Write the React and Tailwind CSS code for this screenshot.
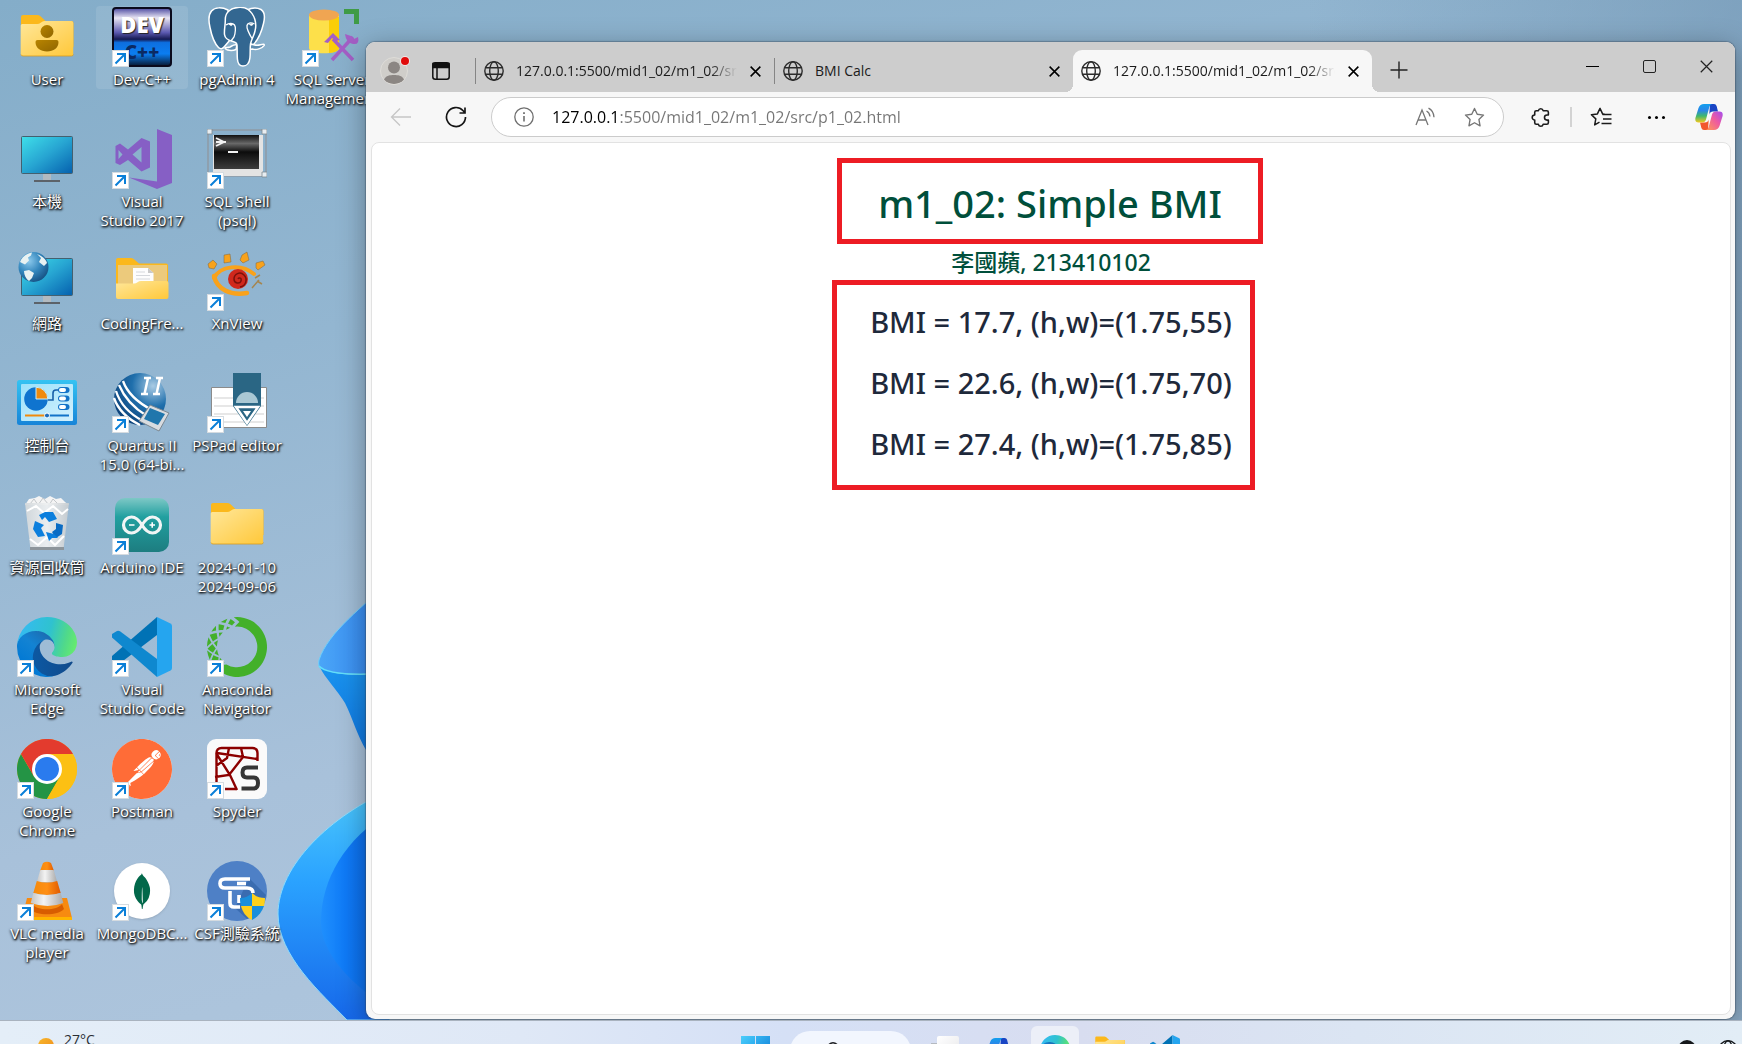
import React from "react";
import { SiPostman, SiMongodb, SiAnaconda } from "react-icons/si";

/* ---------- Desktop icons ---------- */

function Svg({ children, box = "0 0 60 60", className = "size-full" }) {
  return (
    <svg viewBox={box} className={className} aria-hidden="true">
      {children}
    </svg>
  );
}

function FolderDefs() {
  return (
    <defs>
      <linearGradient id="folderFront" x1="0" y1="0" x2="1" y2="1">
        <stop offset="0" stopColor="#ffe79a" />
        <stop offset="1" stopColor="#ffc83a" />
      </linearGradient>
      <linearGradient id="userGold" x1="0" y1="0" x2="1" y2="1">
        <stop offset="0" stopColor="#b88400" />
        <stop offset="1" stopColor="#8f6500" />
      </linearGradient>
    </defs>
  );
}

function FolderIcon({ user }) {
  return (
    <Svg>
      <FolderDefs />
      <path d="M4 10q0-2 2-2h14q2 0 3.500 1.300l5 4.700h26q2 0 2 2v24H4Z" fill="#fbb81c" />
      <path d="M3.700 18.500q0-1.500 1.500-1.500h15q2 0 3.500-1.200l1.500-1.100q1-.7 2.500-.7h26.500q2 0 2 2v31q0 2-2 2H5.700q-2 0-2-2Z" fill="url(#folderFront)" />
      <path d="M4 47.500q.5 1.500 2 1.500h48.500q1.500 0 2-1.500" fill="none" stroke="#d99c1c" strokeWidth=".8" />
      {user && (
        <g fill="url(#userGold)">
          <circle cx="30" cy="24.500" r="6.500" />
          <path d="M20.500 33h19q2 0 2 2c0 6-5 9.500-11.500 9.500S18.500 41 18.500 35q0-2 2-2Z" />
        </g>
      )}
    </Svg>
  );
}

function OpenFolderIcon() {
  return (
    <Svg>
      <FolderDefs />
      <path d="M4 9q0-2 2-2h12.500q2 0 3.500 1.300l5 4.200h27q2 0 2 2V44H4Z" fill="#fbb81c" />
      <path d="M6 14h49v26H6Z" fill="#ecca7c" />
      <path d="M21 17h15l5.500 5V38H21Z" fill="#fdfdfd" />
      <path d="M36 17l5.500 5H36Z" fill="#c9c9c9" />
      <path d="M24 21h9M24 24.500h14M24 28h14" stroke="#d5d8dc" strokeWidth="1" />
      <path d="M4 32.500h18q2 0 3.500-1.200t3.500-1.300h25.500q2 0 2 2V46q0 2-2 2H6q-2 0-2-2Z" fill="url(#folderFront)" />
    </Svg>
  );
}

function Monitor() {
  return (
    <>
      <defs>
        <linearGradient id="screen" x1="0" y1="0" x2="1" y2="1">
          <stop offset="0" stopColor="#3fe0ea" />
          <stop offset=".5" stopColor="#27a5d2" />
          <stop offset="1" stopColor="#0560ae" />
        </linearGradient>
      </defs>
      <path d="M26 45h8v7h-8Z" fill="#b3bac0" />
      <path d="M17 51h26v2H17Z" fill="#5c6269" />
      <rect x="4.500" y="7.500" width="51" height="37" rx="1" fill="url(#screen)" stroke="#44606f" />
    </>
  );
}

function PcIcon() {
  return (
    <Svg>
      <Monitor />
    </Svg>
  );
}

function NetworkIcon() {
  return (
    <Svg>
      <defs>
        <radialGradient id="earth" cx=".35" cy=".3" r=".8">
          <stop offset="0" stopColor="#8cc9ec" />
          <stop offset=".5" stopColor="#3487bd" />
          <stop offset="1" stopColor="#124a7c" />
        </radialGradient>
      </defs>
      <Monitor />
      <circle cx="16.500" cy="16" r="15" fill="url(#earth)" />
      <path d="M3 11c2-5 7-9 12-9.500l-1 3-3 2 1 3-4 4-2-1Zm4 9 5-1 5 3-2 5-3 3c-3-2-5-6-5-10Zm13-17c5 2 9 5 10 9l-3 3-5-4 2-4Z" fill="#e9f2f2" />
    </Svg>
  );
}

function ControlPanelIcon() {
  return (
    <Svg>
      <defs>
        <linearGradient id="cpFrame" x1="0" y1="0" x2="0" y2="1">
          <stop offset="0" stopColor="#35c3f2" />
          <stop offset="1" stopColor="#1784d8" />
        </linearGradient>
        <linearGradient id="cpInner" x1="0" y1="0" x2="1" y2="1">
          <stop offset="0" stopColor="#9be2fb" />
          <stop offset="1" stopColor="#d3f0fd" />
        </linearGradient>
      </defs>
      <rect x="0" y="7" width="60" height="45" rx="2.500" fill="url(#cpFrame)" />
      <rect x="4" y="11" width="52" height="37" rx="1" fill="url(#cpInner)" />
      <circle cx="19" cy="26" r="11.800" fill="#0f74cf" />
      <path d="M19 26V14.200A11.800 11.800 0 0 1 30.800 26Z" fill="#f08a0c" stroke="#c8eefc" strokeWidth="1" />
      <path d="M31 27h5v-7q0-3 3-3h4" fill="none" stroke="#175fa8" strokeWidth="1.600" />
      {[17, 25.5, 34].map((y) => (
        <g key={y}>
          <rect x="41" y={y - 3} width="11.500" height="6" rx="3" fill="#1273c8" />
          <rect x="42" y={y - 2} width="7" height="4" rx="2" fill="#fff" />
        </g>
      ))}
      <path d="M8 42.500h22" stroke="#f08a0c" strokeWidth="2" />
      <path d="M30 42.500h22" stroke="#1273c8" strokeWidth="2" />
      <circle cx="30" cy="42.500" r="2.500" fill="#1d6dbb" stroke="#fff" />
    </Svg>
  );
}

function RecycleIcon() {
  return (
    <Svg>
      <defs>
        <linearGradient id="bin" x1="0" y1="0" x2="1" y2="0">
          <stop offset="0" stopColor="#d3d8db" />
          <stop offset=".5" stopColor="#eef0f1" />
          <stop offset="1" stopColor="#c6ccd0" />
        </linearGradient>
      </defs>
      <path d="M8 10 12 4l6-1 4-2 6 3 5-3 6 3 5-1 4 4 4 3Z" fill="#f4f4f4" />
      <path d="m13 9 4-5 4 6 5-7 6 7 4-6 6 6" fill="none" stroke="#c3c7ca" />
      <path d="M8 8h44l-5.500 46h-33Z" fill="url(#bin)" opacity=".95" />
      <path d="m10 16 9-5 8 7 9-7 9 8 6-5M13 44l8 6 9-8 8 8 9-9" fill="none" stroke="#fff" strokeWidth="2" />
      <path d="M13 52h34v3H13Z" fill="#8d959b" />
      <g fill="#0c7fdd">
        <path d="m22 20 6-3h8l4 7-8 3-4-5-3 3Z" />
        <path d="m39 28 7 2-1 9-6 4-4-6 4-3Z" fill="#0a6cc4" />
        <path d="m18 26 9 4-3 3 4 8-7 1-5-8Z" />
        <path d="m29 37 8 2 4 4h-6l-3 3Z" />
      </g>
    </Svg>
  );
}

function EdgeIcon() {
  return (
    <Svg box="0 0 256 256">
      <defs>
        <linearGradient id="edgeA" x1="60" y1="177" x2="240" y2="177" gradientUnits="userSpaceOnUse">
          <stop offset="0" stopColor="#0c59a4" />
          <stop offset="1" stopColor="#114a8b" />
        </linearGradient>
        <linearGradient id="edgeB" x1="150" y1="100" x2="45" y2="225" gradientUnits="userSpaceOnUse">
          <stop offset="0" stopColor="#1b6fb5" />
          <stop offset=".4" stopColor="#1383d3" />
          <stop offset="1" stopColor="#0078d4" />
        </linearGradient>
        <linearGradient id="edgeC" x1="10" y1="70" x2="250" y2="130" gradientUnits="userSpaceOnUse">
          <stop offset="0" stopColor="#35bbf1" />
          <stop offset=".5" stopColor="#2fc2cf" />
          <stop offset=".8" stopColor="#50d98a" />
          <stop offset="1" stopColor="#66eb6e" />
        </linearGradient>
      </defs>
      <path fill="url(#edgeA)" d="M231 190.500c-3.400 1.800-6.900 3.400-10.500 4.700a101.500 101.500 0 0 1-35.700 6.400c-47 0-88-32.300-88-73.900 0-11.400 6.400-21.900 16.400-27.500-42.600 1.800-53.500 46.100-53.500 72.100 0 73.600 67.800 81 82.400 81 7.900 0 19.800-2.300 27-4.600l1.300-.4c27.600-9.500 51-28.100 66.600-52.800a4 4 0 0 0-6-5Z" />
      <path fill="url(#edgeB)" d="M105.700 241.400a79.300 79.300 0 0 1-22.700-21.300 80.700 80.700 0 0 1 29.500-120c3.200-1.500 8.500-4.100 15.600-4a32.400 32.400 0 0 1 25.700 13 31.900 31.900 0 0 1 6.300 18.700c0-.2 24.500-79.600-80-79.600-43.900 0-80 41.700-80 78.200a130.200 130.200 0 0 0 12.100 56 128 128 0 0 0 156.400 67 75.500 75.500 0 0 1-62.900-8Z" />
      <path fill="url(#edgeC)" d="M152.200 148.800c-.9 1-3.400 2.500-3.400 5.600 0 2.600 1.700 5.200 4.800 7.300 14.300 10 41.400 8.600 41.500 8.600 10.700 0 21.100-2.900 30.300-8.300a61.400 61.400 0 0 0 30.400-52.900c.3-22.400-8-37.300-11.300-43.900C223.300 23.900 177.700 0 128 0A128 128 0 0 0 0 126.200c.5-36.500 36.800-66 80-66 3.500 0 23.500.3 42 10a72.600 72.600 0 0 1 30.900 29.300c6.100 10.600 7.200 24.100 7.200 29.500s-2.700 13.300-7.900 19.800Z" />
    </Svg>
  );
}

function ChromeIcon() {
  return (
    <Svg>
      <circle cx="30" cy="30" r="30" fill="#fcc013" />
      <path d="M30 30 43 37.500 30 60A30 30 0 0 1 4 15l13 22.500Z" fill="#249445" />
      <path d="M4 15a30 30 0 0 1 52 0H30v15L17 37.500Z" fill="#e33b2e" />
      <path d="M30 15h26a30 30 0 0 1-26 45l13-22.500Z" fill="#fcc013" />
      <circle cx="30" cy="30" r="15" fill="#fff" />
      <circle cx="30" cy="30" r="12" fill="#2a7bee" />
    </Svg>
  );
}

function VlcIcon() {
  return (
    <Svg>
      <defs>
        <linearGradient id="cone" x1="0" y1="0" x2="1" y2="0">
          <stop offset="0" stopColor="#f58a0c" />
          <stop offset=".5" stopColor="#ff8f14" />
          <stop offset="1" stopColor="#e05a00" />
        </linearGradient>
        <linearGradient id="coneWhite" x1="0" y1="0" x2="1" y2="0">
          <stop offset="0" stopColor="#c4c4c4" />
          <stop offset=".4" stopColor="#f3f3f3" />
          <stop offset="1" stopColor="#a9a9a9" />
        </linearGradient>
      </defs>
      <path d="M10 37h40l5 20q0 2-2 2H7q-2 0-2-2Z" fill="#f78a10" />
      <path d="M5 56h50v3H5Z" fill="#ffb400" />
      <path d="M15 43c5 7 25 7 30 0l2 5c-6 7-28 7-34 0Z" fill="#d85d00" />
      <path d="M26 2q4-2.500 8 0l3 8H23Z" fill="url(#cone)" />
      <path d="M23.300 9h13.400l3.500 12H19.800Z" fill="url(#coneWhite)" />
      <path d="M19.800 20q10 3 20.400 0l3.500 12q-13 4-27.400 0Z" fill="url(#cone)" />
      <path d="M16.300 32q13.500 4 27.400 0l2.600 10q-15 6-32.600 0Z" fill="url(#coneWhite)" />
    </Svg>
  );
}

function DevCppIcon() {
  return (
    <span className="flex size-full flex-col items-center rounded-sm border-2 border-[#0a0a1c] bg-[linear-gradient(180deg,#5a58a8_0%,#e9e6f4_16%,#5b59b0_42%,#151a52_54%,#0d6fe0_60%,#0b7df0_80%,#08203f_100%)]">
      <span className="font-['Noto_Sans'] text-[22px] leading-[30px] font-black text-white [text-shadow:1px_1px_1px_#222]">DEV</span>
      <span className="font-['Noto_Sans'] text-[19px] leading-[26px] font-black text-[#0b2a63]">C++</span>
    </span>
  );
}

function VisualStudioIcon() {
  return (
    <Svg>
      <path
        fill="#865fc5"
        fillRule="evenodd"
        d="M45 0l15 6v48l-15 6-28-11.500 28 4Z M3.500 17 8 14.500l8 6L29.500 9l8.500 3.500v26l-8.500 4L16 31l-8 5-4.500-2ZM6.500 21v9l4-4.500ZM29.500 18v15.500l-9-8Z"
      />
    </Svg>
  );
}

function QuartusIcon() {
  return (
    <Svg>
      <defs>
        <radialGradient id="qua" cx=".75" cy=".25" r=".9">
          <stop offset="0" stopColor="#a9cbe4" />
          <stop offset=".45" stopColor="#1f6fac" />
          <stop offset="1" stopColor="#0b3d74" />
        </radialGradient>
      </defs>
      <circle cx="28" cy="26" r="26" fill="url(#qua)" />
      <path d="M2 25q6 17 26 27M4 18q6 19 27 30M7 12q8 19 28 31M11 8q6 17 29 29" fill="none" stroke="#fff" strokeWidth="2.300" />
      <path d="m38 32 19 8-10 18-20-10Z" fill="#d8dce0" stroke="#7b8790" />
      <path d="m38 35 15 6-7 11-14-6Z" fill="#2076ac" />
      <path d="M32 5h7M29 21h7M36 5l-3.500 16M44 5h7M41 21h7M48 5l-3.500 16" stroke="#fff" strokeWidth="2.500" />
    </Svg>
  );
}

function ArduinoIcon() {
  return (
    <Svg>
      <defs>
        <linearGradient id="ard" x1="0" y1="0" x2="0" y2="1">
          <stop offset="0" stopColor="#7ec8c6" />
          <stop offset=".35" stopColor="#22a0a0" />
          <stop offset="1" stopColor="#1d7d80" />
        </linearGradient>
      </defs>
      <rect x="3" y="3" width="54" height="54" rx="10" fill="url(#ard)" />
      <path d="M30 30c-3-5-6-8-10.500-8a8 8 0 0 0 0 16c4.500 0 7.500-3 10.500-8s6-8 10.500-8a8 8 0 0 1 0 16c-4.500 0-7.500-3-10.500-8Z" fill="none" stroke="#f2f5f5" strokeWidth="3.200" />
      <path d="M17 30h5.500M37.500 30h5.500M40.200 27.300v5.500" stroke="#fff" strokeWidth="1.600" />
    </Svg>
  );
}

function VsCodeIcon() {
  return (
    <Svg>
      <path d="m45 0-45 39v4l5 3.500q1.500.7 3-.3L45 18Z" fill="#0072b5" />
      <path d="m45 60L0 20.500V17l5-3q1.500-.7 3 .3L45 42Z" fill="#0f88cf" />
      <path d="m45 0 13.500 6.500q1.500.8 1.500 2.500v42q0 1.700-1.500 2.500L45 60Z" fill="#25a5ef" />
    </Svg>
  );
}

function PostmanIcon() {
  return (
    <span className="block size-full rounded-full bg-white">
      <SiPostman className="size-full text-[#ff6c37]" aria-hidden="true" />
    </span>
  );
}

function MongoIcon() {
  return (
    <span className="flex size-full items-center justify-center">
      <span className="flex size-14 items-center justify-center rounded-full bg-white shadow-sm">
        <SiMongodb className="size-9 text-[#02684a]" aria-hidden="true" />
      </span>
    </span>
  );
}

function PgAdminIcon() {
  return (
    <Svg>
      <g fill="#336791" stroke="#fff" strokeWidth="1.500" strokeLinejoin="round" strokeLinecap="round">
        <path d="M40 3C45 .5 50 .3 54 2.500c4 2.500 4 8 2.500 14C55 23 51 33 46 38l-4-2Z" />
        <path d="M21 3C15 0 8 0 4.500 4 1 8 1.500 14 3 20.500 4.500 28 8 37 11.500 40.500c2 2 4 1.500 6-1l5-6Z" />
        <path d="M46 37.500c2 .8 5 1 7.500.3 2.500-.7 4.500-.8 3.500.8-2 3-8 4.500-11 3.500l-3 .2v-5Z" fill="#5f8db0" />
        <path d="M30 38c-3-1-5 1-7 2-2.500 1-4.500 0-5 1 1 2.500 7 3.200 11 1.500Z" fill="#5f8db0" />
        <path d="M22 4c4-4 14-5 19-1.500C48 7.500 50 17 48 24c-1 5-3.500 8-4.500 13-.6 4 0 9-.6 14-.6 5.500-3.400 8-6.900 8s-5.300-3-5.600-7c-.4-5-.1-10-.4-14-.2-2-2-3-4-3.500-4.500-1-8-2.500-8.500-7-.5-5 1-10 .8-15C18.300 9 19.500 6 22 4Z" />
      </g>
      <path d="M19 18c3-2.500 7-2 8.500 0s1 8-.5 12l-3 4M47.500 17c-4-2-7-1-7.500 1.500-.5 3 2 8 5 13" fill="none" stroke="#fff" strokeWidth="1.300" />
      <path d="M22 17.300q2-1 3.500.3-1 2-3.500-.3ZM42.500 17.500q2-1.200 3.500 0-1.500 1.800-3.500 0Z" fill="#fff" stroke="#fff" strokeWidth=".8" />
    </Svg>
  );
}

function SqlShellIcon() {
  return (
    <Svg>
      <defs>
        <linearGradient id="term" x1="0" y1="0" x2="0" y2="1">
          <stop offset="0" stopColor="#111" />
          <stop offset=".25" stopColor="#686868" />
          <stop offset=".5" stopColor="#0c0c0c" />
          <stop offset="1" stopColor="#3d3d3d" />
        </linearGradient>
      </defs>
      <path d="M1 1h58v46H1Z" fill="none" stroke="#8e9ba5" strokeWidth="1.500" />
      <path d="M6 6h50v41H6Z" fill="#e3e3e3" />
      <path d="M7 6h45v34H7Z" fill="url(#term)" />
      <path d="m9 9 8 4-8 4M9 13h10M21 23h10" fill="none" stroke="#f2f2f2" strokeWidth="1.800" />
      <path d="M0 0h5v5H0ZM55 0h5v5h-5ZM55 43h5v5h-5Z" fill="#e8edf1" stroke="#7f8a92" strokeWidth=".8" />
    </Svg>
  );
}

function XnViewIcon() {
  return (
    <Svg>
      <g fill="#f9a21b" stroke="#7a6440" strokeWidth=".5">
        <path d="m1 13 5-4 4 4-3 5-5-1ZM17 4l6-1 1 8-7 1ZM35 4l5-3 2 8-6 3-3-3ZM49 12l7-2 2 4-7 5-2-2Z" />
      </g>
      <path d="M7 27C13 15 34 12 47 23" fill="none" stroke="#f9a21b" strokeWidth="4" strokeLinecap="round" />
      <path d="M7 25c3 13 16 20 33 17" fill="none" stroke="#f9a21b" strokeWidth="4.500" strokeLinecap="round" />
      <path d="m45 37 7-8M50 30l5 3M48 27l5-3" stroke="#a58650" strokeWidth="1.500" />
      <circle cx="31" cy="28" r="10" fill="#d0281c" />
      <path d="M31 28c1-2 4-1 3 2s-7 3-7-2 6-8 10-4 2 11-4 12" fill="none" stroke="#7a120c" strokeWidth="1.500" />
    </Svg>
  );
}

function PsPadIcon() {
  return (
    <Svg>
      <path d="M4.500 14.500h55v40h-55Z" fill="#fff" stroke="#8b8b8b" />
      <path d="M7 25h50M7 33h50M7 41h50M7 49h50" stroke="#cfcfcf" />
      <path d="M26 0h28v33l-14 20-14-20Z" fill="#2a6684" />
      <path d="M29 30a11 11 0 0 1 22 0Z" fill="#a9c8d4" />
      <path d="M29 34h22L40 50Z" fill="#2a6684" stroke="#fff" strokeWidth="2.500" />
      <path d="M36 38h8l-4 6Z" fill="#fff" />
    </Svg>
  );
}

function AnacondaIcon() {
  return <SiAnaconda className="size-full text-[#43b02a]" aria-hidden="true" />;
}

function SpyderIcon() {
  return (
    <Svg>
      <rect width="60" height="60" rx="9" fill="#fafafa" />
      <path d="M9.500 47V14q0-5 5-5h31q5 0 5 5v8M10 14l40 6M22 9l-2 10-11 8M34 9l2 9-14 18-14 2M9 14l14 22 7 15M18 50h12" fill="none" stroke="#8c0000" strokeWidth="2.400" />
      <path d="M51 28.500H40q-4.500 0-4.500 5t4.500 5h6.500q4.500 0 4.500 5.500t-4.500 5.500H34.500" fill="none" stroke="#353535" strokeWidth="4" />
    </Svg>
  );
}

function CsfIcon() {
  return (
    <Svg>
      <circle cx="30" cy="30" r="30" fill="#4e80c6" />
      <path d="m42 17 17 17-6 15-13 9-12-11Z" fill="#3a6cb0" />
      <path d="M43 18H18q-5 0-5 4.500t5 4.500h22q6 0 6 5M30 22.500h9M23 30v12q0 4 4 4h6M32 34v8" fill="none" stroke="#fff" strokeWidth="3.600" />
      <path d="M45 32v13H34c-.7-2.500-1-5-1-8 5 0 9-2 12-5Z" fill="#1a8fdc" />
      <path d="M45 32c3 3 8 5 13 5 0 3-.3 5.500-1 8H45Z" fill="#ffd11a" />
      <path d="M34 45h11v14c-6-3-9.500-8-11-14Z" fill="#ffcf1c" />
      <path d="M45 45h12c-2 6-6 11-12 14Z" fill="#1a8fdc" />
    </Svg>
  );
}

function SsmsIcon() {
  return (
    <Svg>
      <path d="M42 2h15v15h-5V7H42Z" fill="#3f9b46" />
      <path d="M7 7v34c0 7 30 7 30 0V7Z" fill="#fde04a" />
      <path d="M27 10h10v31c0 3-5 4.500-10 5Z" fill="#fbce07" />
      <ellipse cx="22" cy="8" rx="15" ry="5.500" fill="#f0a552" />
      <path d="m30 53 21-23M51 53 31 32" stroke="#a45fc6" strokeWidth="3.500" />
      <path d="m22 35 9-9 7 7-4 1-4-3-4 5Z" fill="#a45fc6" />
      <path d="M43 27q1 9 8 10t5-7l-4 2-3-3Z" fill="#a45fc6" />
    </Svg>
  );
}

const columns = [
  [
    { lines: ["User"], icon: <FolderIcon user /> },
    { lines: ["本機"], icon: <PcIcon /> },
    { lines: ["網路"], icon: <NetworkIcon /> },
    { lines: ["控制台"], icon: <ControlPanelIcon /> },
    { lines: ["資源回收筒"], icon: <RecycleIcon /> },
    { lines: ["Microsoft", "Edge"], icon: <EdgeIcon />, link: true },
    { lines: ["Google", "Chrome"], icon: <ChromeIcon />, link: true },
    { lines: ["VLC media", "player"], icon: <VlcIcon />, link: true },
  ],
  [
    { lines: ["Dev-C++"], icon: <DevCppIcon />, link: true, hover: true },
    { lines: ["Visual", "Studio 2017"], icon: <VisualStudioIcon />, link: true },
    { lines: ["CodingFre..."], icon: <OpenFolderIcon /> },
    { lines: ["Quartus II", "15.0 (64-bi..."], icon: <QuartusIcon />, link: true },
    { lines: ["Arduino IDE"], icon: <ArduinoIcon />, link: true },
    { lines: ["Visual", "Studio Code"], icon: <VsCodeIcon />, link: true },
    { lines: ["Postman"], icon: <PostmanIcon />, link: true },
    { lines: ["MongoDBC..."], icon: <MongoIcon />, link: true },
  ],
  [
    { lines: ["pgAdmin 4"], icon: <PgAdminIcon />, link: true },
    { lines: ["SQL Shell", "(psql)"], icon: <SqlShellIcon />, link: true },
    { lines: ["XnView"], icon: <XnViewIcon />, link: true },
    { lines: ["PSPad editor"], icon: <PsPadIcon />, link: true },
    { lines: ["2024-01-10", "2024-09-06"], icon: <FolderIcon /> },
    { lines: ["Anaconda", "Navigator"], icon: <AnacondaIcon />, link: true },
    { lines: ["Spyder"], icon: <SpyderIcon />, link: true },
    { lines: ["CSF測驗系統"], icon: <CsfIcon />, link: true },
  ],
  [{ lines: ["SQL Server", "Management"], icon: <SsmsIcon />, link: true }],
];

function ShortcutBadge() {
  return (
    <span className="absolute bottom-0 left-0 size-[17px] border border-[#d5dbe0] bg-white">
      <svg viewBox="0 0 15 15" className="size-full" fill="none" stroke="#0a7fd8" strokeWidth="2" aria-hidden="true">
        <path d="M2.500 12.500 11.500 3.500M4 3h8v8" />
      </svg>
    </span>
  );
}

function DesktopIcon({ item }) {
  return (
    <li className="h-[122px] pt-1.5 pr-0.5 pl-px">
      <button
        type="button"
        className={
          item.hover
            ? "flex w-full flex-col items-center rounded-sm bg-white/10 pt-px"
            : "flex w-full flex-col items-center pt-px"
        }
      >
        <span className="relative block size-[60px]">
          {item.icon}
          {item.link && <ShortcutBadge />}
        </span>
        <span className="mt-[3px] text-[15px] leading-[19px] whitespace-nowrap text-white [text-shadow:1px_1px_2px_#000,0_1px_3px_#000]">
          {item.lines.map((line) => (
            <span key={line} className="block">
              {line}
            </span>
          ))}
        </span>
      </button>
    </li>
  );
}

/* ---------- Wallpaper ---------- */

function Bloom() {
  return (
    <svg viewBox="0 0 120 440" className="absolute bottom-0 left-[270px] h-[440px] w-[120px]" aria-hidden="true">
      <defs>
        <linearGradient id="petalTop" x1="0" y1="0" x2="1" y2="0">
          <stop offset="0" stopColor="#4ba6f7" />
          <stop offset="1" stopColor="#2f80ee" />
        </linearGradient>
        <linearGradient id="petalMid" x1="0" y1="0" x2="0" y2="1">
          <stop offset="0" stopColor="#1a93ee" />
          <stop offset="1" stopColor="#0c6fdd" />
        </linearGradient>
        <linearGradient id="petalLow" x1="0" y1="0" x2="0" y2="1">
          <stop offset="0" stopColor="#4cc8fb" />
          <stop offset=".4" stopColor="#2aa2ff" />
          <stop offset="1" stopColor="#1668ea" />
        </linearGradient>
        <linearGradient id="petalDeep" x1="0" y1="0" x2="1" y2="0">
          <stop offset="0" stopColor="#1f8ffd" />
          <stop offset=".35" stopColor="#0f7bf8" />
          <stop offset="1" stopColor="#0a62e0" />
        </linearGradient>
      </defs>
      <path d="M120 1C95 25 58 52 49 80c-2 9 4 12 12 13 20 3 44 2 59 1Z" fill="url(#petalTop)" stroke="#6fd0fb" />
      <path d="M50 87c4 10 18 24 25 36 8 16 12 32 21 47l24 20V93c-20 3-57 4-70-6Z" fill="url(#petalMid)" />
      <path d="M49 86c8 9 42 9 71 7" fill="none" stroke="#63dff9" strokeWidth="1.500" />
      <path d="M120 210C62 235 8 285 8 334c0 42 44 80 69 106h43Z" fill="url(#petalLow)" stroke="#8fdcfb" />
      <path d="M120 232C75 258 51 300 51 342c0 32 30 62 69 88Z" fill="url(#petalDeep)" />
    </svg>
  );
}

/* ---------- Browser ---------- */

function Globe({ className }) {
  return (
    <svg viewBox="0 0 20 20" className={className} fill="none" stroke="currentColor" strokeWidth="1.400" aria-hidden="true">
      <circle cx="10" cy="10" r="9.200" />
      <ellipse cx="10" cy="10" rx="4.300" ry="9.200" />
      <path d="M1.700 6.700h16.600M1.700 13.300h16.600" />
    </svg>
  );
}

function Cross({ className, width = 1.5 }) {
  return (
    <svg viewBox="0 0 12 12" className={className} fill="none" stroke="currentColor" strokeWidth={width} aria-hidden="true">
      <path d="M.7.7l10.600 10.600M11.300.7L.7 11.300" />
    </svg>
  );
}

function Tab({ title, active, fade }) {
  return (
    <div
      role="tab"
      aria-selected={active}
      className={
        active
          ? "relative flex w-[299px] shrink items-center rounded-t-[9px] bg-[#f7f7f7] pl-2"
          : "relative flex w-[299px] shrink items-center pl-[9px] before:absolute before:top-2 before:bottom-2 before:left-0 before:w-px before:bg-[#858585]"
      }
    >
      {active && (
        <>
          <span className="absolute bottom-0 -left-2 size-2 bg-[radial-gradient(circle_at_0_0,transparent_8px,#f7f7f7_8px)]" />
          <span className="absolute -right-2 bottom-0 size-2 bg-[radial-gradient(circle_at_100%_0,transparent_8px,#f7f7f7_8px)]" />
        </>
      )}
      <Globe className="size-5 shrink-0 text-[#2b2b2b]" />
      <span
        className={
          fade
            ? "ml-3 min-w-0 flex-1 overflow-hidden text-sm whitespace-nowrap text-[#1b1b1b] [mask-image:linear-gradient(90deg,#000_88%,transparent)]"
            : "ml-3 min-w-0 flex-1 overflow-hidden text-sm whitespace-nowrap text-[#1b1b1b]"
        }
      >
        {title}
      </span>
      <button type="button" aria-label="Close tab" className="mr-px flex w-9 shrink-0 items-center justify-center">
        <Cross className="size-[11px] text-black" width={1.7} />
      </button>
    </div>
  );
}

function CopilotIcon({ className }) {
  return (
    <svg viewBox="0 0 28 28" className={className} aria-hidden="true">
      <defs>
        <linearGradient id="copA" x1="0" y1="0" x2="0" y2="1">
          <stop offset="0" stopColor="#12a0ee" />
          <stop offset=".35" stopColor="#2a86e8" />
          <stop offset=".65" stopColor="#3fb86c" />
          <stop offset="1" stopColor="#f4c91f" />
        </linearGradient>
        <linearGradient id="copB" x1="1" y1="0" x2="0" y2="1">
          <stop offset="0" stopColor="#a34df0" />
          <stop offset=".45" stopColor="#ee5aa0" />
          <stop offset="1" stopColor="#ff9a54" />
        </linearGradient>
      </defs>
      <path d="M15 1h4q2 0 2.600 2L23 8.500h-5q-3 0-3.700 3Z" fill="#1945c4" />
      <path d="M13 27H9q-2 0-2.600-2L5 19.500h5q3 0 3.700-3Z" fill="#f2572e" />
      <path d="M9 1h8q-2 .6-2.700 3L11 16.500q-.8 3-4 3H3.500Q-.3 19.500.4 15L3.500 5Q5 1 9 1Z" fill="url(#copA)" />
      <path d="M19 27h-8q2-.6 2.700-3L17 11.500q.8-3 4-3h3.500q3.800 0 3.100 4.500l-3.100 10q-1.500 4-5.500 4Z" fill="url(#copB)" />
    </svg>
  );
}

function TitleBar() {
  return (
    <div className="flex h-[50px] bg-[#cdcdcd]">
      <div className="flex w-[109px] shrink-0 items-center pt-2 pl-3.5">
        <button type="button" aria-label="Profile" className="relative size-7">
          <svg viewBox="0 0 28 28" className="size-full" aria-hidden="true">
            <circle cx="14" cy="14" r="13.500" fill="#d0ceca" stroke="#dedcd8" />
            <circle cx="14" cy="10.500" r="6" fill="#8b8683" />
            <path d="M4 22.500C6 18.500 10 18 14 18s8 .5 10 4.500A13.500 13.500 0 0 1 4 22.500Z" fill="#8b8683" />
          </svg>
          <span className="absolute top-0 -right-px size-2 rounded-full bg-[#e00b0b] ring-1 ring-[#f0e6e6]" />
        </button>
        <button type="button" aria-label="Tab actions" className="ml-6">
          <svg viewBox="0 0 18 18" className="size-[18px]" fill="none" stroke="#111" strokeWidth="1.500" aria-hidden="true">
            <rect x=".8" y=".8" width="16.400" height="16.400" rx="2.500" />
            <path d="M1 1.500h16V5.500H1Z" fill="#111" />
            <path d="M5 6v11" />
          </svg>
        </button>
      </div>
      <div role="tablist" className="flex min-w-0 pt-2">
        <Tab title="127.0.0.1:5500/mid1_02/m1_02/src" fade />
        <Tab title="BMI Calc" />
        <Tab title="127.0.0.1:5500/mid1_02/m1_02/src" active fade />
      </div>
      <button type="button" aria-label="New tab" className="flex w-[54px] items-center justify-center pt-1.5">
        <svg viewBox="0 0 18 18" className="size-[18px]" stroke="#222" strokeWidth="1.400" aria-hidden="true">
          <path d="M9 .5v17M.5 9h17" />
        </svg>
      </button>
      <div className="ml-auto flex h-12">
        <button type="button" aria-label="Minimize" className="flex w-[57px] items-center justify-center">
          <span className="h-px w-[13px] bg-black" />
        </button>
        <button type="button" aria-label="Maximize" className="flex w-[57px] items-center justify-center">
          <span className="size-[13px] rounded-xs border border-[#222]" />
        </button>
        <button type="button" aria-label="Close" className="flex w-[57px] items-center justify-center">
          <Cross className="size-[13px] text-[#222]" width={1.1} />
        </button>
      </div>
    </div>
  );
}

const STAR = "M10 1.400l2.600 5.500 6 .8-4.400 4.200 1.100 6L10 15l-5.300 2.900 1.100-6L1.400 7.700l6-.8Z";

function Toolbar() {
  return (
    <div className="flex h-[50px] items-center">
      <button type="button" aria-label="Back" className="ml-6 text-[#c6c6c6]">
        <svg viewBox="0 0 22 22" className="size-[22px]" fill="none" stroke="currentColor" strokeWidth="1.300" aria-hidden="true">
          <path d="M21 11H1.500M10 2.500 1.500 11l8.500 8.500" />
        </svg>
      </button>
      <button type="button" aria-label="Refresh" className="ml-[33px] text-[#161616]">
        <svg viewBox="0 0 22 22" className="size-[22px]" fill="none" stroke="currentColor" strokeWidth="1.700" aria-hidden="true">
          <path d="M20.500 11A9.500 9.500 0 1 1 17.900 4.500L19.700 6.500M20 1.500V7h-5.500" />
        </svg>
      </button>
      <div className="ml-6 flex h-10 min-w-0 flex-1 items-center rounded-full border border-[#cbcbcb] bg-white pr-[18px] pl-[22px]">
        <svg viewBox="0 0 20 20" className="size-5 shrink-0" fill="none" stroke="#6f6f6f" strokeWidth="1.300" aria-hidden="true">
          <circle cx="10" cy="10" r="9.200" />
          <path d="M10 9v5.500" strokeWidth="1.600" />
          <path d="M10 5.200v1.900" strokeWidth="1.800" />
        </svg>
        <input
          type="text"
          aria-label="Address"
          defaultValue="127.0.0.1:5500/mid1_02/m1_02/src/p1_02.html"
          className="ml-[18px] min-w-0 flex-1 bg-[linear-gradient(90deg,#000_68px,#757575_68px)] bg-clip-text text-base text-transparent outline-none"
        />
        <button type="button" aria-label="Read aloud" className="text-[#767676]">
          <svg viewBox="0 0 20 20" className="size-5" fill="none" stroke="currentColor" strokeWidth="1.300" aria-hidden="true">
            <path d="M1 18 7 3l6 15M3 13h8" />
            <path d="M11.500 4q3 1.500 3.500 5.500M13.500 1.200q5 2.500 5.500 9" />
          </svg>
        </button>
        <button type="button" aria-label="Add to favorites" className="ml-[29px] text-[#767676]">
          <svg viewBox="0 0 20 20" className="size-[21px]" fill="none" stroke="currentColor" strokeWidth="1.300" strokeLinejoin="round" aria-hidden="true">
            <path d={STAR} />
          </svg>
        </button>
      </div>
      <button type="button" aria-label="Extensions" className="ml-[26px] text-[#1b1b1b]">
        <svg viewBox="0 0 20 20" className="size-[21px]" fill="none" stroke="currentColor" strokeWidth="1.500" strokeLinejoin="round" aria-hidden="true">
          <path d="M6 3.500h2a2.300 2.300 0 0 1 4.500 0H16q1.500 0 1.500 1.500v2.700h-1.300a2.400 2.400 0 0 0 0 4.800h1.300V15q0 1.500-1.500 1.500h-3.500a2.300 2.300 0 0 1-4.500 0H6q-1.500 0-1.500-1.500v-2.600a2.400 2.400 0 0 1 0-4.800V5Q4.500 3.500 6 3.500Z" />
        </svg>
      </button>
      <span className="ml-[19px] h-5 w-0.5 bg-[#d3d3d3]" />
      <button type="button" aria-label="Favorites" className="ml-[18px] text-[#1b1b1b]">
        <svg viewBox="0 0 22 20" className="h-5 w-[22px]" fill="none" stroke="currentColor" strokeWidth="1.500" strokeLinejoin="round" aria-hidden="true">
          <path d="M14.500 7.300l-1.900-.4L10 1.400 7.400 6.900l-6 .8 4.400 4.200-1.100 6L9.500 15.200" />
          <path d="M12.500 7.500h9M13 12h8.500M11.500 16.500h10" />
        </svg>
      </button>
      <button type="button" aria-label="Settings and more" className="ml-9 flex w-[17px] justify-between">
        <span className="size-[3px] rounded-full bg-black" />
        <span className="size-[3px] rounded-full bg-black" />
        <span className="size-[3px] rounded-full bg-black" />
      </button>
      <button type="button" aria-label="Copilot" className="mr-3 ml-[30px]">
        <CopilotIcon className="size-7" />
      </button>
    </div>
  );
}

const results = ["BMI = 17.7, (h,w)=(1.75,55)", "BMI = 22.6, (h,w)=(1.75,70)", "BMI = 27.4, (h,w)=(1.75,85)"];

function Page() {
  return (
    <main className="mr-1 mb-1 ml-[5px] flex flex-1 flex-col items-center rounded-lg border border-[#e2e2e2] bg-white pt-[15px] font-['Noto_Sans','Noto_Sans_CJK_TC',sans-serif] font-medium text-[#1e293b]">
      <div className="mr-0.5 flex h-[86px] w-[426px] items-center justify-center border-5 border-[#ed1c24] pt-1">
        <h1 className="text-[38px] leading-[44px] whitespace-nowrap text-[#004f3b]">m1_02: Simple BMI</h1>
      </div>
      <h2 className="text-[23px] leading-9 whitespace-nowrap text-[#004f3b]">李國蘋, 213410102</h2>
      <div className="mr-4 h-[210px] w-[423px] border-5 border-[#ed1c24] pt-1.5 pl-4 text-center text-[29px] leading-[61px] whitespace-nowrap">
        {results.map((line) => (
          <p key={line}>{line}</p>
        ))}
      </div>
    </main>
  );
}

/* ---------- Taskbar ---------- */

function Taskbar() {
  return (
    <footer className="flex h-6 shrink-0 items-start overflow-hidden border-t border-[#a9b3bf] bg-[linear-gradient(90deg,#e4eef8_0%,#dfe8f6_30%,#d5e0f6_45%,#d8ddf0_62%,#dbe5f3_78%,#e2edf6_100%)]">
      <div className="flex w-[741px] shrink-0 items-start pt-3 pl-[38px]">
        <span className="mt-[5px] size-4 rounded-full bg-[linear-gradient(135deg,#f8b72b,#ee8a1c)]" />
        <span className="ml-2.5 text-sm leading-[14px] text-[#2a2e33]">27°C</span>
      </div>
      <button type="button" aria-label="Start" className="mt-[15px] grid size-[29px] shrink-0 grid-cols-2 gap-px">
        <span className="bg-[linear-gradient(135deg,#4ccdfa,#24a5ec)]" />
        <span className="bg-[linear-gradient(135deg,#35b4f1,#1688dc)]" />
        <span className="bg-[#1c94e4]" />
        <span className="bg-[#0f78d2]" />
      </button>
      <button type="button" aria-label="Search" className="mt-2.5 ml-5 flex h-10 w-[121px] shrink-0 justify-center rounded-full bg-[#f2f6fe] pt-[11px] pr-9">
        <svg viewBox="0 0 16 16" className="size-4" fill="none" stroke="#1d1f22" strokeWidth="1.600" aria-hidden="true">
          <circle cx="8" cy="6" r="5.200" />
          <path d="m11.500 10 4 5" />
        </svg>
      </button>
      <button type="button" aria-label="Task view" className="mt-[15px] ml-5 flex shrink-0 items-start">
        <span className="mt-[7px] h-5 w-[6px] bg-[#b4b9c0]" />
        <span className="h-6 w-[22px] rounded-xs bg-[linear-gradient(135deg,#ffffff,#e6e6e8)]" />
      </button>
      <span className="mt-4 ml-7 shrink-0">
        <CopilotIcon className="size-[26px]" />
      </span>
      <button type="button" aria-label="Edge" className="mt-[5px] ml-[18px] flex size-12 shrink-0 justify-center rounded-md bg-[#eceff8] pt-[9px]">
        <span className="size-[30px]">
          <EdgeIcon />
        </span>
      </button>
      <button type="button" aria-label="File Explorer" className="mt-[11px] ml-[14px] size-[34px] shrink-0">
        <FolderIcon />
      </button>
      <button type="button" aria-label="Visual Studio Code" className="mt-3.5 ml-[23px] size-[30px] shrink-0">
        <VsCodeIcon />
      </button>
      <div className="ml-auto flex items-start gap-[22px] pt-[19px] pr-1">
        <span className="size-[18px] rounded-full bg-[#15181b]" />
        <Globe className="size-5 text-[#15181b]" />
      </div>
    </footer>
  );
}

export default function App() {
  return (
    <div className="flex h-screen flex-col overflow-hidden font-['Open_Sans','Noto_Sans_CJK_TC',sans-serif]">
      <div className="relative min-h-0 flex-1 overflow-hidden bg-[linear-gradient(165deg,#84adc9_0%,#93b6d1_28%,#a8c1da_58%,#b4cae0_100%)]">
        <div className="absolute inset-0 bg-[linear-gradient(90deg,transparent_75%,#6f94b299_100%)]" />
        <Bloom />
        <nav aria-label="Desktop" className="relative flex">
          {columns.map((items, i) => (
            <ul key={i} className="w-[95px] shrink-0">
              {items.map((item) => (
                <DesktopIcon key={item.lines.join(" ")} item={item} />
              ))}
            </ul>
          ))}
        </nav>
        <section
          aria-label="Browser"
          className="absolute top-[42px] right-[7px] bottom-px left-[366px] flex flex-col overflow-hidden rounded-[9px] bg-[#f7f7f7] shadow-[0_6px_28px_rgba(0,0,0,0.35),0_0_1px_1px_rgba(60,80,100,0.4)]"
        >
          <TitleBar />
          <Toolbar />
          <Page />
        </section>
      </div>
      <Taskbar />
    </div>
  );
}
